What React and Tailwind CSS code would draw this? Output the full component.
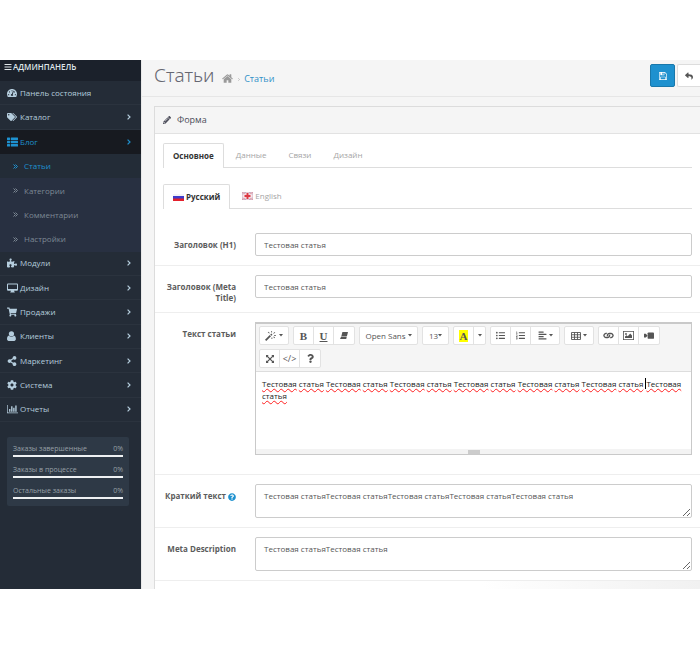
// App.jsx

import React from "react";

import {
  FaAlignLeft,
  FaBars,
  FaCog,
  FaLink,
  FaListOl,
  FaListUl,
  FaPencilAlt,
  FaPuzzlePiece,
  FaQuestion,
  FaQuestionCircle,
  FaReply,
  FaShareAlt,
  FaShoppingCart,
  FaTachometerAlt,
  FaTags,
} from "react-icons/fa";

/* ICONS */

const HomeIcon = (props) => (
  <svg viewBox="64 200 1664 1400" fill="currentColor" {...props}>
    <path d="M1472 992v480q0 26-19 45t-45 19h-384v-384h-256v384h-384q-26 0-45-19t-19-45v-480q0-1 .5-3t.5-3l575-474 575 474q1 2 1 6zm223-69l-62 74q-8 9-21 11h-3q-13 0-21-7l-692-577-692 577q-12 8-24 7-13-2-21-11l-62-74q-8-10-7-23.500t11-21.500l719-599q32-26 76-26t76 26l244 204v-195q0-14 9-23t23-9h192q14 0 23 9t9 23v408l219 182q10 8 11 21.500t-7 23.500z" />
  </svg>
);

const ThListIcon = (props) => (
  <svg viewBox="0 0 22 18" fill="currentColor" {...props}>
    <rect x="0" y="0" width="6" height="5" rx="1" />
    <rect x="7.5" y="0" width="14.5" height="5" rx="1" />
    <rect x="0" y="6.5" width="6" height="5" rx="1" />
    <rect x="7.5" y="6.5" width="14.5" height="5" rx="1" />
    <rect x="0" y="13" width="6" height="5" rx="1" />
    <rect x="7.5" y="13" width="14.5" height="5" rx="1" />
  </svg>
);

const DesktopIcon = (props) => (
  <svg viewBox="0 0 22 18" fill="currentColor" {...props}>
    <path
      fillRule="evenodd"
      d="M2 0h18a2 2 0 0 1 2 2v10.500a2 2 0 0 1-2 2h-6l.7 2.200h.8V18h-9v-1.300h.8l.7-2.200H2a2 2 0 0 1-2-2V2a2 2 0 0 1 2-2zM2 1.800v9h18v-9z"
    />
  </svg>
);

const UserIcon = (props) => (
  <svg viewBox="0 0 16 18" fill="currentColor" {...props}>
    <circle cx="8" cy="5" r="4.700" />
    <path d="M3.600 8.200C5 10 6.400 10.600 8 10.600s3-.6 4.400-2.400c2.600.4 3.600 3.200 3.600 6.400 0 2-1.300 3.400-3 3.400H3c-1.700 0-3-1.400-3-3.400 0-3.200 1-6 3.600-6.400z" />
  </svg>
);

const BarChartIcon = (props) => (
  <svg viewBox="0 128 2048 1536" fill="currentColor" {...props}>
    <path d="M640 896v512h-256v-512h256zm384-512v1024h-256v-1024h256zm1024 1152v128h-2048v-1536h128v1408h1920zm-640-896v768h-256v-768h256zm384-384v1152h-256v-1152h256z" />
  </svg>
);

const SaveIcon = (props) => (
  <svg viewBox="128 128 1536 1536" fill="currentColor" {...props}>
    <path d="M512 1536h768v-384h-768v384zm896 0h128v-896q0-14-10-38.500t-20-34.500l-281-281q-10-10-34-20t-39-10v416q0 40-28 68t-68 28h-576q-40 0-68-28t-28-68v-416h-128v1280h128v-416q0-40 28-68t68-28h832q40 0 68 28t28 68v416zm-384-928v-320q0-13-9.500-22.500t-22.500-9.500h-192q-13 0-22.500 9.500t-9.500 22.500v320q0 13 9.500 22.500t22.500 9.500h192q13 0 22.500-9.500t9.500-22.500zm640 32v928q0 40-28 68t-68 28h-1344q-40 0-68-28t-28-68v-1344q0-40 28-68t68-28h928q40 0 88 20t76 48l280 280q28 28 48 76t20 88z" />
  </svg>
);

const AngleIcon = (props) => (
  <svg viewBox="0 0 6 10" fill="none" stroke="currentColor" strokeWidth="2" {...props}>
    <path d="M1 1l4 4-4 4" />
  </svg>
);

const DoubleAngleIcon = (props) => (
  <svg viewBox="0 0 10 10" fill="none" stroke="currentColor" strokeWidth="2" {...props}>
    <path d="M1 1l4 4-4 4M5 1l4 4-4 4" />
  </svg>
);

const Caret = () => (
  <svg viewBox="0 0 8 5" fill="currentColor" className="w-1 shrink-0">
    <path d="M0 0h8L4 5z" />
  </svg>
);

const MagicIcon = (props) => (
  <svg viewBox="0 0 24 20" fill="currentColor" {...props}>
    <path d="M0 17.500L9.500 8l2.500 2.500L2.500 20zM10.500 7l2-2L15 7.500l-2 2z" />
    <path d="M12.500 0h1.600v3h-1.600zM16.500 4.500l3-2.500 1 1.200-3 2.500zM18 8.500h4v1.600h-4zM16.500 12l1.200-1 2.500 2.500-1.200 1.100zM5.500 2.500L6.600 1.400 9.500 4 8.400 5.200zM13 13h1.600v3H13z" />
  </svg>
);

const EraserIcon = (props) => (
  <svg viewBox="0 0 20 18" fill="currentColor" {...props}>
    <path d="M6 0h14l-2.500 10h-14zM3 11.500h14L15.500 18H1.500q-1.500 0-1-1.600z" />
  </svg>
);

const TableIcon = (props) => (
  <svg viewBox="0 0 20 16" fill="none" stroke="currentColor" strokeWidth="1.800" {...props}>
    <path d="M1 1h18v14H1zM1 5.500h18M1 10.500h18M7 1v14M13 1v14" />
  </svg>
);

const PictureIcon = (props) => (
  <svg viewBox="0 0 22 18" fill="currentColor" {...props}>
    <path fillRule="evenodd" d="M0 0h22v18H0zM1.600 1.600v14.800h18.800V1.600z" />
    <circle cx="6" cy="6" r="1.800" />
    <path d="M4 14v-3l3-2.500 2.500 2L14.500 5 18 9v5z" />
  </svg>
);

const VideoIcon = (props) => (
  <svg viewBox="0 0 22 16" fill="currentColor" {...props}>
    <rect x="8" y="1" width="14" height="14" rx="2" />
    <path d="M8 8L4 4H0v8h4z" />
  </svg>
);

const ExpandIcon = (props) => (
  <svg viewBox="0 0 18 18" fill="currentColor" {...props}>
    <path d="M0 0h6L4 2l12 12 2-2v6h-6l2-2L2 4 0 6z" />
    <path d="M18 0v6l-2-2L4 16l2 2H0v-6l2 2L14 2l-2-2z" />
  </svg>
);

const RuFlag = () => (
  <svg viewBox="0 0 11 7" className="w-[11px]">
    <path fill="#f4f4f8" d="M0 0h11v7H0z" />
    <path fill="#3d3ccb" d="M0 2h11v3H0z" />
    <path fill="#e3202c" d="M0 4.500h11V7H0z" />
  </svg>
);

const EnFlag = () => (
  <svg viewBox="0 0 22 16" className="w-[11px]">
    <path fill="#a9a4c4" d="M0 0h22v16H0z" />
    <path stroke="#f1dfe6" strokeWidth="4" d="M0 0l22 16M22 0L0 16" />
    <path stroke="#e08f9a" strokeWidth="2" d="M0 0l22 16M22 0L0 16" />
    <path stroke="#f8e6ea" strokeWidth="7" d="M11 0v16M0 8h22" />
    <path stroke="#dc3a45" strokeWidth="4" d="M11 2v12M5 8h12" />
    <path fill="none" stroke="#c9a3b4" d="M.5.5h21v15H.5z" />
  </svg>
);

/* SIDEBAR */

const subItems = ["Статьи", "Категории", "Комментарии", "Настройки"];

const items = [
  { label: "Панель состояния", icon: FaTachometerAlt, plain: true },
  { label: "Каталог", icon: FaTags },
  { label: "Блог", icon: ThListIcon, children: subItems },
  { label: "Модули", icon: FaPuzzlePiece },
  { label: "Дизайн", icon: DesktopIcon },
  { label: "Продажи", icon: FaShoppingCart },
  { label: "Клиенты", icon: UserIcon },
  { label: "Маркетинг", icon: FaShareAlt },
  { label: "Система", icon: FaCog },
  { label: "Отчеты", icon: BarChartIcon },
];

const stats = ["Заказы завершенные", "Заказы в процессе", "Остальные заказы"];

const Sidebar = () => {
  return (
    <aside className="w-[141px] shrink-0 bg-[#242c37] text-[8px] text-[#b5cddd]">
      <button className="flex h-[21px] w-full items-center gap-px bg-[#1b212b] px-1 pb-2 font-semibold text-[#dfe6ea]">
        <FaBars className="size-2" />
        АДМИНПАНЕЛЬ
      </button>

      <ul className="grid h-[341px] auto-rows-fr">
        {items.map(({ label, icon: Icon, plain, children }) => (
          <React.Fragment key={label}>
            <li
              className={
                children
                  ? "bg-[#171a20] text-[#1e91cf]"
                  : "border-b border-[#2b333e]"
              }
            >
              <a href="#" className="flex h-full items-center gap-0.5 pr-[10px] pl-[7px]">
                <span className="flex w-[11px] shrink-0">
                  <Icon className="h-[10px] w-auto max-w-[11px]" />
                </span>
                <span className="flex-1">{label}</span>
                {!plain && <AngleIcon className="h-[6px]" />}
              </a>
            </li>

            {children && (
              <li className="row-span-4 bg-[#283041] text-[#7d8894]">
                <ul className="grid h-full auto-rows-fr">
                  {children.map((child, i) => (
                    <li
                      key={child}
                      className={i === 0 ? "bg-[#232c37] text-[#1e91cf]" : ""}
                    >
                      <a href="#" className="flex h-full items-center gap-[6px] pl-[13px]">
                        <DoubleAngleIcon className="w-[5px]" />
                        {child}
                      </a>
                    </li>
                  ))}
                </ul>
              </li>
            )}
          </React.Fragment>
        ))}
      </ul>

      {/* ORDER STATS */}
      <ul className="mx-[7px] mr-3 mt-[15px] flex flex-col gap-2 rounded-xs bg-[#2e3946] px-1.5 pt-[7px] pb-[7px] text-[7px] leading-[10px] text-[#98a0a7]">
        {stats.map((label) => (
          <li key={label}>
            <div className="flex justify-between">
              <span>{label}</span>
              <span>0%</span>
            </div>
            <div className="mt-px h-[2px] bg-[#eef1f3]" />
          </li>
        ))}
      </ul>
    </aside>
  );
};

/* FORM */

const Tab = ({ active, children }) => (
  <button
    className={
      active
        ? "mr-px -mb-px flex h-[25px] items-center gap-0.5 rounded-t-xs border border-b-0 border-[#dddddd] bg-white px-[9px] font-bold text-[#333333]"
        : "flex h-6 items-center gap-0.5 px-[11px] text-[#a5a5a5]"
    }
  >
    {children}
  </button>
);

const Row = ({ id, label, help, children }) => (
  <div className="flex gap-[19px] border-b border-[#eeeeee] py-[9px] pr-2 pl-2">
    <label
      htmlFor={id}
      className="w-[73px] shrink-0 pt-[6px] text-right leading-[11px] font-bold text-[#5c5c5c]"
    >
      {label}
      {help && <FaQuestionCircle className="ml-0.5 inline size-2 text-[#1e91cf]" />}
    </label>
    <div className="min-w-0 flex-1">{children}</div>
  </div>
);

const fieldClass =
  "block w-full rounded-xs border border-[#cccccc] bg-white px-2 text-[8px] text-[#555555]";

const ToolGroup = ({ children }) => (
  <div className="flex h-[19px] divide-x divide-[#e2e2e2] rounded-xs border border-[#e2e2e2] bg-white text-[#555555]">
    {children}
  </div>
);

const Tool = ({ label, wide, children }) => (
  <button
    aria-label={label}
    className={
      wide
        ? "flex w-7 items-center justify-center gap-0.5"
        : "flex w-[20px] items-center justify-center"
    }
  >
    {children}
  </button>
);

const Misspelled = ({ children }) => (
  <span className="underline decoration-[#ff2020] decoration-wavy decoration-1 underline-offset-1 [text-decoration-skip-ink:none]">
    {children}
  </span>
);

const Editor = () => {
  return (
    <div className="mb-[10px] border border-t-2 border-[#c9c9c9] bg-white">
      {/* TOOLBAR */}
      <div className="flex flex-wrap gap-x-1 gap-y-1 border-b border-[#dddddd] bg-[#f5f5f5] px-[3px] pt-[2px] pb-[3px]">
        <ToolGroup>
          <Tool label="Стиль" wide>
            <MagicIcon className="w-[12px]" />
            <Caret />
          </Tool>
        </ToolGroup>

        <ToolGroup>
          <Tool>
            <span className="font-['Liberation_Serif'] text-[11px] font-bold">B</span>
          </Tool>
          <Tool>
            <span className="font-['Liberation_Serif'] text-[11px] font-bold underline">U</span>
          </Tool>
          <Tool label="Очистить">
            <EraserIcon className="w-2" />
          </Tool>
        </ToolGroup>

        <ToolGroup>
          <button className="flex w-[57px] items-center justify-center gap-0.5">
            Open Sans
            <Caret />
          </button>
        </ToolGroup>

        <ToolGroup>
          <button className="flex w-[25px] items-center justify-center">
            13
            <Caret />
          </button>
        </ToolGroup>

        <ToolGroup>
          <Tool>
            <span className="bg-[#ffff00] px-px font-['Liberation_Serif'] text-[11px] leading-3 font-bold">
              A
            </span>
          </Tool>
          <button aria-label="Цвет" className="flex w-[11px] items-center justify-center">
            <Caret />
          </button>
        </ToolGroup>

        <ToolGroup>
          <Tool label="Список">
            <FaListUl className="size-[9px]" />
          </Tool>
          <Tool label="Нумерация">
            <FaListOl className="size-[9px]" />
          </Tool>
          <Tool label="Абзац" wide>
            <FaAlignLeft className="size-[9px]" />
            <Caret />
          </Tool>
        </ToolGroup>

        <ToolGroup>
          <Tool label="Таблица" wide>
            <TableIcon className="w-[10px]" />
            <Caret />
          </Tool>
        </ToolGroup>

        <ToolGroup>
          <Tool label="Ссылка">
            <FaLink className="size-[9px] rotate-45" />
          </Tool>
          <Tool label="Картинка">
            <PictureIcon className="w-[11px]" />
          </Tool>
          <Tool label="Видео">
            <VideoIcon className="w-[10px]" />
          </Tool>
        </ToolGroup>

        <div className="flex basis-full">
          <ToolGroup>
            <Tool label="На весь экран">
              <ExpandIcon className="size-2" />
            </Tool>
            <Tool>
              <span className="text-[9px]">&lt;/&gt;</span>
            </Tool>
            <Tool label="Помощь">
              <FaQuestion className="size-[9px]" />
            </Tool>
          </ToolGroup>
        </div>
      </div>

      {/* TEXT */}
      <div
        role="textbox"
        aria-label="Текст статьи"
        contentEditable
        suppressContentEditableWarning
        className="min-h-[77px] px-1.5 pt-1.5 leading-[12px] text-[#222222]"
      >
        {Array.from({ length: 7 }, (_, i) => (
          <React.Fragment key={i}>
            {i === 6 && <span className="border-l border-black" />}
            <Misspelled>Тестовая</Misspelled> <Misspelled>статья</Misspelled>{" "}
          </React.Fragment>
        ))}
      </div>

      <div className="flex h-[5px] items-end justify-center bg-[#f3f3f3]">
        <div className="h-1 w-3 bg-[#cccccc]" />
      </div>
    </div>
  );
};

const App = () => {
  return (
    <div className="flex overflow-hidden bg-white pt-[60px] font-['Open_Sans',sans-serif] text-[8px] leading-[12px]">
      <Sidebar />

      <main className="min-w-0 flex-1 border-l border-[#e8e8e8] bg-[#f5f5f5]">
        {/* PAGE HEADER */}
        <header className="flex h-[37px] items-start border-b border-[#e6e6e6] pl-3">
          <h1 className="pt-[3px] font-['Noto_Sans','Open_Sans',sans-serif] text-[19px] leading-6 font-light text-[#666771]">
            Статьи
          </h1>
          <nav className="flex items-center gap-1 pt-[13px] pl-2 text-[9px] text-[#999999]">
            <HomeIcon className="w-[11px]" />
            <AngleIcon className="ml-px h-[3px]" />
            <a href="#" className="text-[#3191c8]">
              Статьи
            </a>
          </nav>
          <div className="mt-1 ml-auto flex gap-0.5">
            <button
              aria-label="Сохранить"
              className="flex h-[23px] w-[25px] items-center justify-center rounded-xs border border-[#1978ab] bg-[#1e91cf] text-white"
            >
              <SaveIcon className="size-2" />
            </button>
            <button
              aria-label="Назад"
              className="flex h-[23px] w-[23px] items-center justify-center rounded-l-xs border border-r-0 border-[#dddddd] bg-white text-[#555555]"
            >
              <FaReply className="size-2" />
            </button>
          </div>
        </header>

        <section className="mt-[9px] ml-3 border-t border-l border-[#dcdcdc] bg-white">
          <h2 className="flex h-[27px] items-center gap-1.5 border-b border-[#e2e2e2] bg-[#f5f5f5] pl-2 text-[9px] text-[#4c4d5a]">
            <FaPencilAlt className="size-2" />
            Форма
          </h2>

          <div className="pt-[9px]">
            <div className="mr-2 ml-2 flex border-b border-[#dddddd]">
              <Tab active>Основное</Tab>
              <Tab>Данные</Tab>
              <Tab>Связи</Tab>
              <Tab>Дизайн</Tab>
            </div>

            <div className="mt-4 mr-2 mb-[15px] ml-2 flex border-b border-[#dddddd]">
              <Tab active>
                <RuFlag />
                Русский
              </Tab>
              <Tab>
                <EnFlag />
                English
              </Tab>
            </div>

            <Row id="h1" label="Заголовок (H1)">
              <input id="h1" className={`${fieldClass} h-[23px]`} defaultValue="Тестовая статья" />
            </Row>

            <Row id="title" label="Заголовок (Meta Title)">
              <input id="title" className={`${fieldClass} mb-1 h-[23px]`} defaultValue="Тестовая статья" />
            </Row>

            <Row label="Текст статьи">
              <Editor />
            </Row>

            <Row id="short" label="Краткий текст" help>
              <textarea
                id="short"
                className={`${fieldClass} h-[34px] pt-[5px]`}
                defaultValue="Тестовая статьяТестовая статьяТестовая статьяТестовая статьяТестовая статья"
              />
            </Row>

            <Row id="description" label="Meta Description">
              <textarea
                id="description"
                className={`${fieldClass} h-[34px] pt-[5px]`}
                defaultValue="Тестовая статьяТестовая статья"
              />
            </Row>

            <div className="ml-auto h-2 w-2/5 bg-linear-to-r from-white to-[#f1f1f1]" />
          </div>
        </section>
      </main>
    </div>
  );
};

export default App;
